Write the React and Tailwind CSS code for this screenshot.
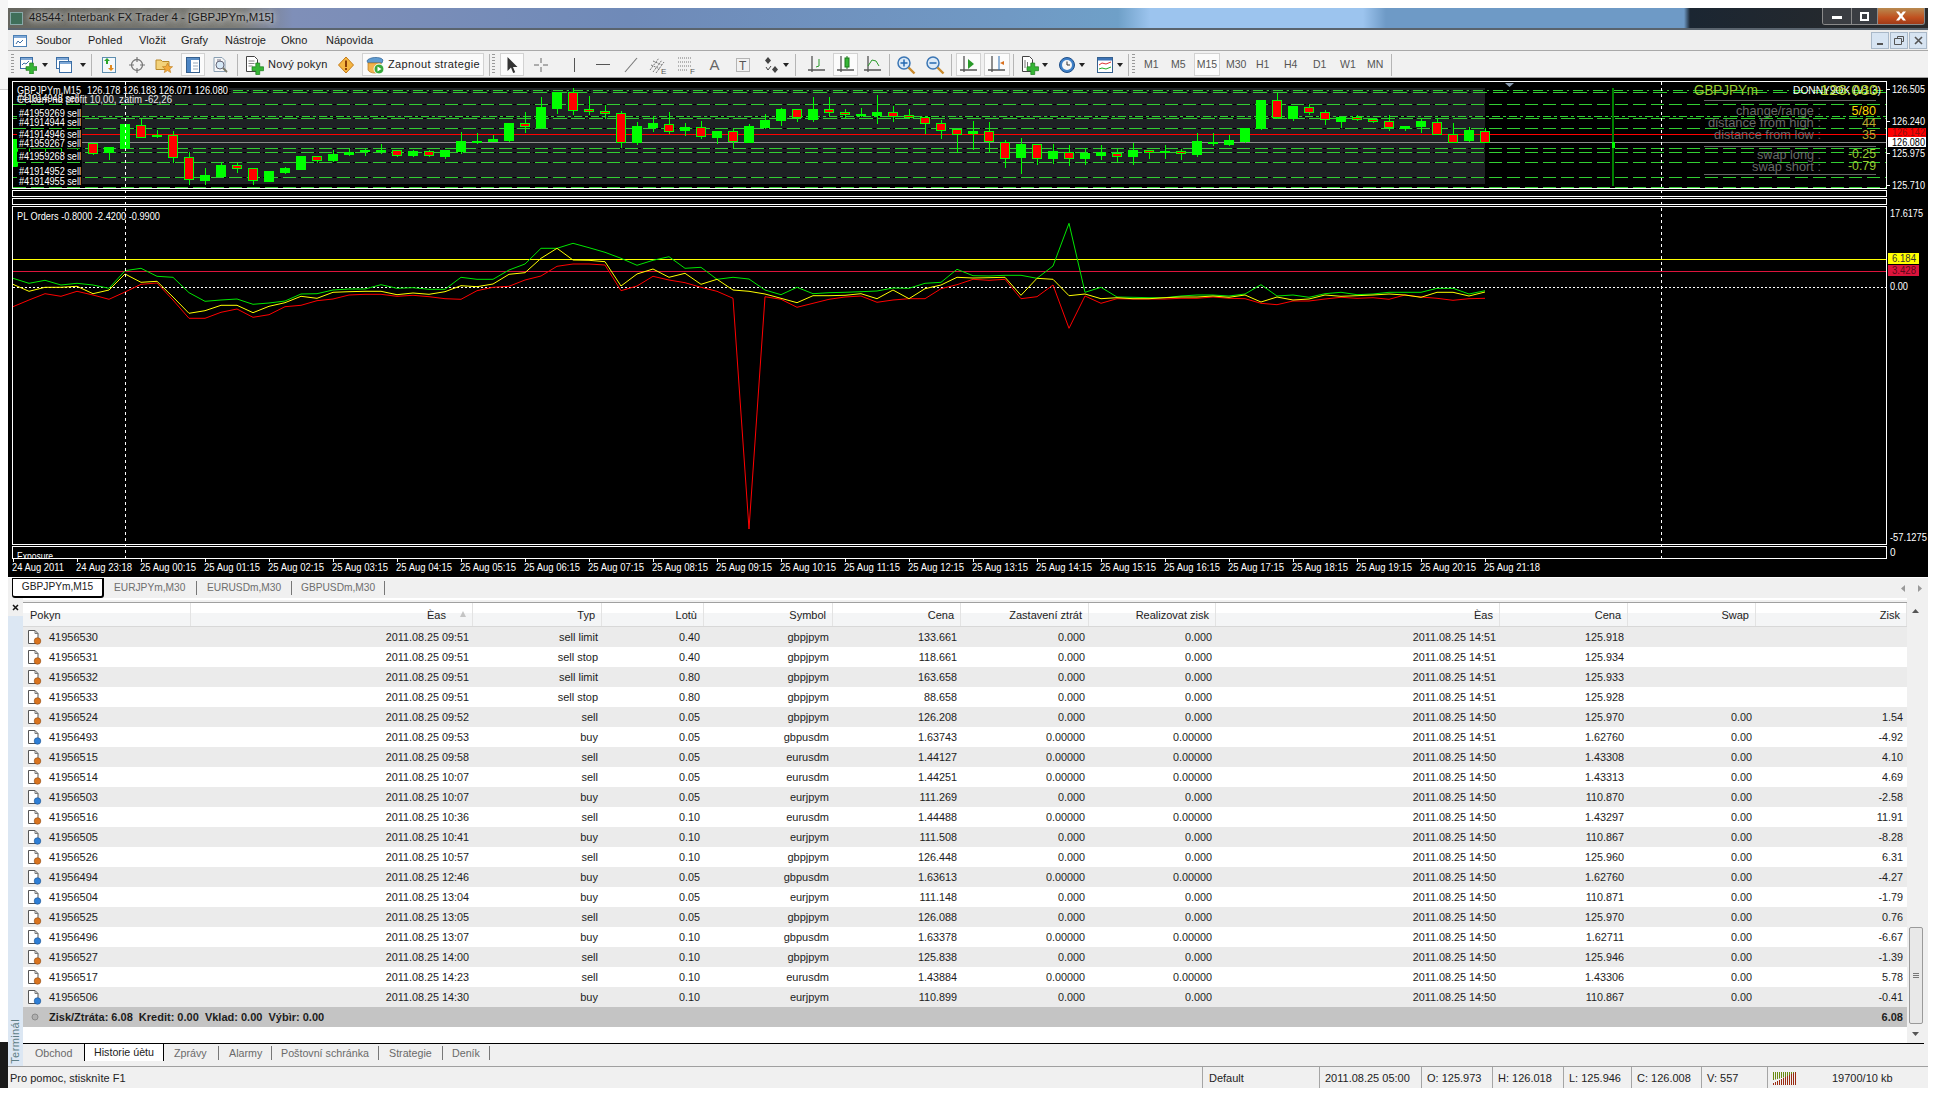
import React from "react";

const rows = [
  ["41956530","09:51","sell limit","0.40","gbpjpym","133.661","0.000","0.000","14:51","125.918","",""],
  ["41956531","09:51","sell stop","0.40","gbpjpym","118.661","0.000","0.000","14:51","125.934","",""],
  ["41956532","09:51","sell limit","0.80","gbpjpym","163.658","0.000","0.000","14:51","125.933","",""],
  ["41956533","09:51","sell stop","0.80","gbpjpym","88.658","0.000","0.000","14:51","125.928","",""],
  ["41956524","09:52","sell","0.05","gbpjpym","126.208","0.000","0.000","14:50","125.970","0.00","1.54"],
  ["41956493","09:53","buy","0.05","gbpusdm","1.63743","0.00000","0.00000","14:51","1.62760","0.00","-4.92"],
  ["41956515","09:58","sell","0.05","eurusdm","1.44127","0.00000","0.00000","14:50","1.43308","0.00","4.10"],
  ["41956514","10:07","sell","0.05","eurusdm","1.44251","0.00000","0.00000","14:50","1.43313","0.00","4.69"],
  ["41956503","10:07","buy","0.05","eurjpym","111.269","0.000","0.000","14:50","110.870","0.00","-2.58"],
  ["41956516","10:36","sell","0.10","eurusdm","1.44488","0.00000","0.00000","14:50","1.43297","0.00","11.91"],
  ["41956505","10:41","buy","0.10","eurjpym","111.508","0.000","0.000","14:50","110.867","0.00","-8.28"],
  ["41956526","10:57","sell","0.10","gbpjpym","126.448","0.000","0.000","14:50","125.960","0.00","6.31"],
  ["41956494","12:46","buy","0.05","gbpusdm","1.63613","0.00000","0.00000","14:50","1.62760","0.00","-4.27"],
  ["41956504","13:04","buy","0.05","eurjpym","111.148","0.000","0.000","14:50","110.871","0.00","-1.79"],
  ["41956525","13:05","sell","0.05","gbpjpym","126.088","0.000","0.000","14:50","125.970","0.00","0.76"],
  ["41956496","13:07","buy","0.10","gbpusdm","1.63378","0.00000","0.00000","14:50","1.62711","0.00","-6.67"],
  ["41956527","14:00","sell","0.10","gbpjpym","125.838","0.000","0.000","14:50","125.946","0.00","-1.39"],
  ["41956517","14:23","sell","0.10","eurusdm","1.43884","0.00000","0.00000","14:50","1.43306","0.00","5.78"],
  ["41956506","14:30","buy","0.10","eurjpym","110.899","0.000","0.000","14:50","110.867","0.00","-0.41"],
];

// kind (g/r), body top, body bottom, wick top, wick bottom: y values at 3x scale
const candles = [
  ["g",418,500,418,500],["r",418,442,418,458],["g",432,444,415,460],["g",434,437,430,465],["g",427,435,400,450],
  ["r",428,457,428,465],["g",442,457,442,480],["g",372,444,372,444],["r",374,409,358,412],["g",405,409,390,415],
  ["r",406,472,393,488],["r",472,539,457,555],["g",525,539,505,555],["g",495,527,485,530],["r",496,506,490,520],
  ["r",505,541,505,555],["g",513,542,513,542],["g",504,515,500,522],["g",468,507,468,510],["r",469,482,469,490],
  ["g",462,480,450,485],["g",457,464,447,467],["g",451,455,447,468],["g",451,453,433,463],["r",451,466,451,470],
  ["g",454,467,450,470],["r",454,466,450,470],["g",450,467,450,476],["g",423,453,397,462],["g",423,425,400,432],
  ["g",418,423,405,427],["g",370,420,370,425],["r",370,379,336,400],["g",321,381,292,388],["g",276,324,276,342],
  ["r",277,331,265,346],["r",328,334,288,345],["r",334,340,315,358],["r",340,427,333,445],["g",378,427,365,435],
  ["g",369,381,348,395],["r",371,391,337,402],["g",381,389,369,407],["r",382,409,363,416],["g",393,410,393,431],
  ["r",394,424,388,444],["g",378,426,372,428],["g",360,380,343,388],["g",328,362,325,378],["r",328,352,328,365],
  ["g",328,357,292,365],["r",328,337,292,347],["r",337,344,327,358],["g",343,345,324,350],["g",336,344,285,372],
  ["r",337,349,318,365],["r",346,352,328,358],["r",350,367,347,402],["r",368,388,360,417],["r",388,403,386,460],
  ["g",394,401,363,450],["r",394,424,365,455],["r",425,472,421,503],["g",432,471,415,522],["r",433,475,433,495],
  ["g",454,476,432,492],["r",455,472,436,497],["g",459,473,445,495],["g",457,465,435,480],["r",458,466,446,486],
  ["g",450,467,430,495],["r",451,457,450,477],["g",454,457,436,478],["r",454,460,446,480],["g",423,461,400,470],
  ["g",427,431,400,438],["g",420,431,405,437],["g",385,423,385,430],["g",301,386,301,390],["r",301,352,278,358],
  ["g",319,354,319,362],["r",320,336,312,345],["r",337,359,330,375],["g",350,362,350,385],["r",352,358,345,362],
  ["r",358,364,355,370],["r",364,382,345,392],["g",379,385,379,393],["g",364,380,355,400],["r",365,400,355,400],
  ["r",401,424,370,425],["g",391,420,380,425],["r",392,426,385,428],
];

const greenPL = [235,250,241,255,250,255,265,212,205,229,232,278,304,300,297,313,309,303,282,281,270,267,267,254,265,263,268,268,232,238,238,210,192,145,145,130,143,157,175,196,181,170,205,202,238,232,237,270,284,262,281,278,277,275,273,264,265,250,247,208,227,228,226,226,235,198,70,277,262,291,292,293,293,288,285,285,288,282,254,288,285,292,281,277,284,282,277,277,277,265,265,282,272];
const yellowPL = [253,274,262,262,259,281,270,222,247,244,291,340,332,316,316,338,319,308,289,295,277,275,274,274,284,279,283,275,257,260,252,223,218,175,145,180,181,185,258,222,207,232,220,253,238,270,274,282,295,308,287,287,286,281,296,270,296,266,255,232,234,233,232,286,235,238,287,282,296,293,296,296,293,291,291,288,292,285,306,291,300,297,285,289,287,285,282,285,292,277,277,288,276];
const redPL = [320,300,281,289,274,285,298,276,253,249,300,355,355,337,327,352,344,320,316,302,297,285,283,283,289,286,290,296,298,272,262,259,240,228,199,192,192,195,272,258,229,240,248,262,274,295,987,290,298,322,310,298,291,288,307,300,296,296,266,254,238,241,238,296,290,255,385,288,310,296,297,297,297,295,295,291,295,296,310,314,303,303,297,292,295,293,298,285,291,295,301,296,295];

const plPath = (a) => a.map((v, i) => `${13 + 16 * i},${(200 + v / 3).toFixed(1)}`).join(" ");

const T = ({ x, y, w, s = 10, fill = "#fff", children, weight }) => (
  <text x={x} y={y + s * 0.36} fontSize={s} fill={fill} fontWeight={weight} textLength={w} lengthAdjust="spacingAndGlyphs">
    {children}
  </text>
);

const dashLines = [
  [90.7, "10 4 2 4"], [92.7, "14 6"], [104.7, "13 5"], [116.7, "8 3 3 3"], [118.7, "14 4"], [128.7, "13 5"],
  [148.7, "13 5"], [152.7, "13 5"], [162.7, "13 5"], [177.3, "13 5"], [187.3, "13 5"],
];

const ChartOverlay = () => {
  const labels = [
    ["#41914948 sell", 98.7, 17], ["#41959269 sell", 113.7, 19], ["#41914944 sell", 122.7, 19], ["#41914946 sell", 134.7, 19],
    ["#41959267 sell", 143.3, 19], ["#41959268 sell", 156.7, 19], ["#41914952 sell", 171.7, 19], ["#41914955 sell", 181.7, 19],
  ];
  const hours = Array.from({ length: 21 }, (_, i) => `25 Aug ${String(i).padStart(2, "0")}:15`);
  const axis = ["24 Aug 2011", "24 Aug 23:18", ...hours, "25 Aug 21:18"];
  return (
    <svg className="absolute inset-0 block" width="1920" height="499" viewBox="8 78 1920 499">
      <rect x="82" y="88" width="1403" height="96" fill="#1e2124" />
      {dashLines.map(([y, d], i) => (
        <g key={i} shapeRendering="crispEdges">
          <line x1="13" x2="1886" y1={y} y2={y} stroke="#000" strokeDasharray="3 2" />
          <line x1="13" x2="1886" y1={y} y2={y} stroke="#32cd32" strokeDasharray={d} />
        </g>
      ))}
      <line x1="13" x2="1886" y1="142.5" y2="142.5" stroke="#8a8a8a" shapeRendering="crispEdges" />
      <line x1="13" x2="1886" y1="134.5" y2="134.5" stroke="#ff0000" shapeRendering="crispEdges" />
      {candles.map(([k, t, b, wt, wb], i) => {
        const x = 13 + 16 * i;
        const left = Math.max(13, x - 5);
        const right = x + 5;
        return (
          <g key={i} shapeRendering="crispEdges">
            {i > 0 && <line x1={x + 0.5} x2={x + 0.5} y1={Math.round(wt / 3)} y2={Math.round(wb / 3)} stroke="#00ff00" />}
            <rect x={left + 0.5} y={Math.round(t / 3) + 0.5} width={right - left - 1} height={Math.max(1, Math.round((b - t) / 3))} fill={k === "g" ? "#00ff00" : "#ff0000"} stroke="#00ff00" />
          </g>
        );
      })}
      <rect x="1612" y="88" width="2" height="98" fill="#008000" />
      <rect x="1612" y="142" width="3" height="6" fill="#00ff00" />
      <polygon points="1505,83 1514,83 1509.5,87" fill="#8a9bb0" />
      <rect x="13" y="85" width="216" height="10" fill="#000" />
      {labels.map(([t, y]) => (
        <rect key={t} x="17" y={y - 5} width="65" height="10" fill="#000" />
      ))}
      <T x={17} y={90} w={64}>GBPJPYm,M15</T>
      <T x={87} y={90} w={141}>126.178 126.183 126.071 126.080</T>
      {labels.map(([t, y, x]) => (
        <T key={t} x={x} y={y} w={62} fill="#fff">{t}</T>
      ))}
      <T x={17} y={99.3} w={155} fill="#e8e8e8">Celkem na profit 10,00, zatim -62,26</T>

      {/* info panel */}
      <T x={1694} y={90} w={64} s={14} fill="#9acd32">GBPJPYm</T>
      <T x={1793} y={90} w={88} s={10}>DONNY9OK (V1.3)</T>
      <T x={1820} y={90} w={58} s={15} fill="#b4d432">126.080</T>
      <line x1="1704" x2="1876" y1="100.5" y2="100.5" stroke="#666" shapeRendering="crispEdges" />
      <line x1="1704" x2="1876" y1="146.5" y2="146.5" stroke="#666" shapeRendering="crispEdges" />
      <line x1="1704" x2="1876" y1="174.5" y2="174.5" stroke="#666" shapeRendering="crispEdges" />
      <T x={1736} y={110.7} w={85} s={13} fill="#696969">change/range :</T>
      <T x={1708} y={122.7} w={113} s={13} fill="#696969">distance from high :</T>
      <T x={1714} y={134.7} w={107} s={13} fill="#696969">distance from low :</T>
      <T x={1757} y={154.7} w={64} s={13} fill="#696969">swap long :</T>
      <T x={1752} y={166.7} w={69} s={13} fill="#696969">swap short :</T>
      <T x={1851.5} y={110} w={24.5} s={13} fill="#ffd700">5/80</T>
      <T x={1862} y={122} w={14} s={13} fill="#b8a830">44</T>
      <T x={1862} y={134} w={14} s={13} fill="#b8a830">35</T>
      <T x={1848} y={153.7} w={28} s={13} fill="#9acd32">-0.25</T>
      <T x={1848} y={165.7} w={28} s={13} fill="#9acd32">-0.79</T>

      {/* price axis */}
      {[[89.5,"126.505"],[121.6,"126.240"],[153.6,"125.975"],[185.7,"125.710"]].map(([y, t]) => (
        <g key={t}>
          <line x1="1887" x2="1890" y1={y} y2={y} stroke="#fff" shapeRendering="crispEdges" />
          <T x={1892} y={y} w={33}>{t}</T>
        </g>
      ))}
      <rect x="1888" y="128" width="38" height="9" fill="#ff0000" />
      <T x={1892} y={132.5} w={33} fill="#8a1010">126.142</T>
      <rect x="1888" y="137" width="38" height="10" fill="#fff" />
      <T x={1892} y={142} w={33} fill="#000">126.080</T>

      {/* sub-window */}
      <T x={17} y={216.7} w={143}>PL Orders -0.8000 -2.4200 -0.9900</T>
      <line x1="13" x2="1886" y1="259.5" y2="259.5" stroke="#ffff00" shapeRendering="crispEdges" />
      <line x1="13" x2="1886" y1="271.5" y2="271.5" stroke="#dc143c" shapeRendering="crispEdges" />
      <line x1="13" x2="1886" y1="287.5" y2="287.5" stroke="#fff" strokeDasharray="2 2" shapeRendering="crispEdges" />
      <polyline points={plPath(greenPL)} fill="none" stroke="#00e600" strokeWidth="1" />
      <polyline points={plPath(redPL)} fill="none" stroke="#ff0000" strokeWidth="1" />
      <polyline points={plPath(yellowPL)} fill="none" stroke="#ffff00" strokeWidth="1" />
      <T x={1890} y={213} w={33}>17.6175</T>
      <rect x="1888" y="253" width="31" height="11" fill="#ffff00" />
      <T x={1892} y={258.5} w={24} fill="#333">6.184</T>
      <rect x="1888" y="265" width="31" height="11" fill="#dc143c" />
      <T x={1892} y={270.5} w={24} fill="#5a0a1a">3.428</T>
      <T x={1890} y={286.5} w={18}>0.00</T>
      <T x={1890} y={537.7} w={37}>-57.1275</T>
      <T x={1890} y={552}>0</T>
      <clipPath id="expo"><rect x="13" y="547" width="200" height="11" /></clipPath>
      <g clipPath="url(#expo)"><T x={17} y={556} w={36}>Exposure</T></g>

      {/* crosshair */}
      {[125.5, 1661.5].map((x) => (
        <line key={x} x1={x} x2={x} y1="82" y2="558" stroke="#fff" strokeDasharray="3 3" shapeRendering="crispEdges" />
      ))}

      {/* time axis */}
      {axis.map((t, i) => {
        const tick = 13 + 64 * i;
        return (
          <g key={t}>
            <line x1={tick + 0.5} x2={tick + 0.5} y1="559" y2="562" stroke="#fff" shapeRendering="crispEdges" />
            <T x={i === 0 ? 12 : tick - 1} y={567.3} w={i === 0 ? 52 : 56}>{t}</T>
          </g>
        );
      })}
    </svg>
  );
};

/* ---------- icons ---------- */
const Ic = ({ w = 18, h = 18, children }) => (
  <svg width={w} height={h} viewBox={`0 0 ${w} ${h}`} className="block shrink-0">{children}</svg>
);
const Plus = ({ x, y, s = 10 }) => (
  <path d={`M${x + s * 0.33} ${y}h${s * 0.34}v${s * 0.33}h${s * 0.33}v${s * 0.34}h-${s * 0.33}v${s * 0.33}h-${s * 0.34}v-${s * 0.33}h-${s * 0.33}v-${s * 0.34}h${s * 0.33}z`} fill="#35b535" stroke="#1b7a1b" strokeWidth=".7" />
);
const Arrow = () => <span className="block w-0 h-0 border-l-[3px] border-r-[3px] border-t-[4px] border-l-transparent border-r-transparent border-t-[#222]" />;
const Win = ({ x = 1, y = 1, w = 12, h = 11 }) => (
  <g><rect x={x + 0.5} y={y + 0.5} width={w} height={h} fill="#fff" stroke="#3b6ea5" /><rect x={x + 1} y={y + 1} width={w - 1} height="2" fill="#7fa8d6" /></g>
);
const NewChart = () => <Ic><Win /><path d="M3 9l2-2 2 1 3-3" stroke="#3b6ea5" fill="none" /><Plus x={7} y={7} s={11} /></Ic>;
const Profiles = () => <Ic><Win x={1} y={1} /><Win x={4} y={5} /></Ic>;
const MarketW = () => <Ic><rect x="2.5" y="1.5" width="13" height="15" fill="#f4f8fb" stroke="#5e8fb0" /><path d="M7 2l3 3H8v3H6V5H4z" fill="#2aa52a" /><path d="M11 15l3-3h-2V9h-2v3H8z" fill="#e08a20" /></Ic>;
const CircleCross = () => <Ic><circle cx="9" cy="9" r="5.5" fill="none" stroke="#777" strokeWidth="1.3" /><path d="M9 1v5M9 12v5M1 9h5M12 9h5" stroke="#777" strokeWidth="1.2" /></Ic>;
const FolderStar = () => <Ic><path d="M1 4h5l1.5 1.5H14v8H1z" fill="#f3d27a" stroke="#b9892a" /><path d="M12.5 7l1.5 3.4 3.6.3-2.8 2.3.9 3.6-3.2-2-3.2 2 .9-3.6L7.4 10.7l3.6-.3z" fill="#f2a93b" stroke="#c07a18" strokeWidth=".6" /></Ic>;
const Navigator = () => <Ic><rect x="2.5" y="1.5" width="13" height="15" fill="#fff" stroke="#345f8e" /><rect x="3" y="2" width="12" height="2" fill="#5b8ec5" /><rect x="3" y="4" width="4" height="12" fill="#4d86c6" /><path d="M9 7h5M9 10h5M9 13h5" stroke="#9ab" /></Ic>;
const DocMag = () => <Ic><path d="M3 1.5h8l3 3v11H3z" fill="#f6f6f6" stroke="#8aa0b4" /><circle cx="9" cy="9" r="4" fill="#d6e8f6" stroke="#667" /><path d="M12 12l4 4" stroke="#776" strokeWidth="1.8" /><path d="M7 3v3M9 3v3" stroke="#778" /></Ic>;
const DocPlus = () => <Ic w={20} h={20}><path d="M2.5 1.5h8l3 3v12h-11z" fill="#fff" stroke="#444" /><path d="M4.5 6h6M4.5 8.5h6M4.5 11h4" stroke="#888" /><Plus x={8} y={8} s={11.5} /></Ic>;
const Warn = () => <Ic><path d="M9 1l7.5 8L9 17 1.5 9z" fill="#f5b642" stroke="#c47a17" /><rect x="8" y="4.5" width="2" height="6.5" fill="#8a3d07" /><rect x="8" y="12" width="2" height="2" fill="#8a3d07" /></Ic>;
const Robot = () => <Ic w={20} h={20}><path d="M2 6c1-4 14-5 16-1l-1 3H3z" fill="#5f9bd0" stroke="#2b5f92" strokeWidth=".7" /><path d="M3 8h13v7c-2 4-11 4-13 0z" fill="#f1b34e" stroke="#b47a1d" strokeWidth=".7" /><circle cx="14" cy="14" r="5" fill="#35a83a" stroke="#fff" /><path d="M12.5 11.5l4 2.5-4 2.5z" fill="#fff" /></Ic>;
const Cursor = () => <Ic w={12} h={18}><path d="M1.5 1v14l3.5-3.5 2.2 5.5 2-.8-2.2-5.3h4.5z" fill="#333" /></Ic>;
const Cross = () => <Ic><path d="M9 2v5M9 11v5M2 9h5M11 9h5" stroke="#666" /></Ic>;
const VLine = () => <Ic w={3} h={16}><rect x="1" y="1" width="1" height="14" fill="#555" /></Ic>;
const HLine = () => <Ic h={3} w={14}><rect x="0" y="1" width="14" height="1" fill="#555" /></Ic>;
const DLine = () => <Ic w={14} h={16}><path d="M1 15L13 1" stroke="#777" strokeWidth="1.1" /></Ic>;
const FibE = () => <Ic w={20} h={20}><path d="M2 15L11 3M5 17L14 5M8 18L16 7M3 10l9 4M5 6l9 4" stroke="#777" fill="none" strokeDasharray="2 1" /><text x="13" y="19" fontSize="8" fill="#555">E</text></Ic>;
const FibF = () => <Ic w={20} h={20}><path d="M1 3h13M1 7h13M1 11h13M1 15h9" stroke="#777" strokeDasharray="1 1" /><text x="13" y="19" fontSize="8" fill="#555">F</text></Ic>;
const LetterA = () => <span className="text-[15px] leading-none text-[#666]">A</span>;
const LetterT = () => <Ic><rect x="2.5" y="2.5" width="13" height="13" fill="none" stroke="#777" strokeDasharray="1 1" /><text x="5" y="14" fontSize="12" fill="#555">T</text></Ic>;
const ArrowsSet = () => <Ic><path d="M6 1l3 3.5-3 3.5-3-3.5zM13 10l3 3.5-3 3.5-3-3.5z" fill="#444" /><path d="M4 11l2 3 3-4" stroke="#444" fill="none" /></Ic>;
const Axes = ({ children }) => <Ic w={20} h={20}><path d="M5 1v16M1 15h17" stroke="#555" strokeWidth="1.3" fill="none" />{children}</Ic>;
const Mag = ({ plus }) => <Ic w={20} h={20}><circle cx="8" cy="8" r="6" fill="#dbe9f7" stroke="#3b76b4" strokeWidth="1.5" /><path d="M4.5 8h7" stroke="#2469b0" strokeWidth="1.5" />{plus && <path d="M8 4.5v7" stroke="#2469b0" strokeWidth="1.5" />}<path d="M12.5 12.5l6 6" stroke="#c98a2c" strokeWidth="2.4" /></Ic>;
const Clock = () => <Ic><circle cx="9" cy="9" r="7.5" fill="#3e80c8" stroke="#1f4f88" /><circle cx="9" cy="9" r="5" fill="#f6f6f6" /><path d="M9 5.5V9h3" stroke="#333" fill="none" /></Ic>;
const Template = () => <Ic><rect x="1.5" y="1.5" width="15" height="15" fill="#fff" stroke="#345f8e" /><rect x="2" y="2" width="14" height="2.5" fill="#3d73b5" /><path d="M3 9l3-2 4 1 5-2" stroke="#d33" fill="none" /><path d="M3 13l3-1 4 1 5-2" stroke="#2a2" fill="none" /></Ic>;
const IndDoc = () => <Ic w={20} h={20}><path d="M3.5 1.5h7l3 3v12h-10z" fill="#fff" stroke="#444" /><path d="M6 5v8M8.5 7v5" stroke="#777" /><Plus x={8} y={8} s={11.5} /></Ic>;
const Sep = () => <span className="block w-px h-[22px] bg-[#b5b5b5]" />;
const Grip = () => <span className="block w-[3px] h-[21px] bg-[repeating-linear-gradient(#999_0_1px,transparent_1px_3px)]" />;
const RowDoc = ({ buy }) => (
  <svg width="15" height="16" viewBox="0 0 15 16" className="block shrink-0">
    <path d="M1.5 1.5h6.5l3 3v10h-9.500z" fill="#fff" stroke="#555" />
    <path d="M8 1.500v3h3" fill="none" stroke="#777" />
    <circle cx="10.500" cy="12" r="3.300" fill={buy ? "#2f7fd6" : "#d9741f"} stroke={buy ? "#1a508f" : "#8f4a12"} strokeWidth=".6" />
  </svg>
);

const Cell = ({ className = "", children }) => <div className={`pr-[4px] text-right truncate ${className}`}>{children}</div>;
const Head = ({ children }) => <div className="pr-[6px] pt-[1px] text-right border-r border-[#e3e3e3] h-full flex items-center justify-end">{children}</div>;

const gridCols = "grid grid-cols-[168px_282px_129px_102px_129px_128px_128px_127px_284px_128px_128px_151px] items-center";

export default function App() {
  return (
    <div className="w-[1936px] h-[1096px] overflow-hidden bg-white flex font-['Liberation_Sans',Arial,sans-serif] text-[11px] leading-none text-[#1c1c1c]">
      {/* desktop behind, left */}
      <div className="w-[8px] h-full flex flex-col">
        <div className="h-[90px] border-b border-[#cfcfcf] bg-[#f6f6f6]" />
        <div className="flex-1 bg-white" />
        <div className="h-[46px] bg-[#1a1a1a]" />
        <div className="h-[8px] bg-white" />
      </div>

      {/* application window */}
      <div className="w-[1920px] h-full flex flex-col pt-[8px]">
        {/* title bar */}
        <div className="h-[22px] border-b-2 border-[#5a646e] flex items-center bg-[linear-gradient(90deg,#66665f_0px,#7d7d78_230px,#7f8fb8_285px,#6f8ab8_620px,#7099c4_1000px,#6fa0c8_1110px,#9cc4ee_1142px,#9cc4ee_1355px,#6e9ac6_1378px,#6e9ac6_1676px,#1b2632_1682px,#2a2a2a_100%)]">
          <div className="w-[13px] h-[13px] ml-[2px] mr-[6px] bg-[#3f6f5a] border border-[#8aa] shrink-0" />
          <span className="text-[11.4px] text-[#1a1a1a] [text-shadow:0_0_6px_#dcdcdc,0_0_6px_#dcdcdc]">48544: Interbank FX Trader 4 - [GBPJPYm,M15]</span>
          <div className="ml-auto mr-[3px] self-start flex h-[17px] border border-t-0 border-[#8a8a8a] rounded-b-[3px] overflow-hidden">
            <div className="w-[29px] flex items-center justify-center bg-[#3a3d42] border-r border-[#8a8a8a]"><span className="block w-[10px] h-[3px] bg-white mt-[2px]" /></div>
            <div className="w-[26px] flex items-center justify-center bg-[#3a3d42] border-r border-[#8a8a8a]"><span className="block w-[9px] h-[9px] border-2 border-white" /></div>
            <div className="w-[46px] flex items-center justify-center bg-[linear-gradient(#b88a50,#c0501f_60%,#a03a18)]">
              <svg width="12" height="10" viewBox="0 0 12 10"><path d="M1 0.500h3l2 2.500 2-2.500h3L7.500 5 11 9.500H8L6 7 4 9.500H1L4.500 5z" fill="#fff" /></svg>
            </div>
          </div>
        </div>

        {/* menu */}
        <div className="h-[21px] bg-[#eeeeee] border-b border-[#a9a9a9] flex items-center relative">
          <svg width="15" height="15" viewBox="0 0 15 15" className="ml-[5px] mr-[8px] block"><rect x=".5" y="2.500" width="13" height="11" fill="#fff" stroke="#4a7fb5" /><rect x="1" y="3" width="12" height="2" fill="#7fa8d6" /><path d="M3 11l2-3 2 2 3-3" stroke="#3b6ea5" fill="none" /></svg>
          <span className="w-[52px]">Soubor</span>
          <span className="w-[51px]">Pohled</span>
          <span className="w-[42px]">Vložit</span>
          <span className="w-[44px]">Grafy</span>
          <span className="w-[56px]">Nástroje</span>
          <span className="w-[45px]">Okno</span>
          <span>Nápovìda</span>
          <div className="ml-auto mr-[1px] flex gap-[1px]">
            <div className="w-[18px] h-[17px] bg-[#d7e4f2] border border-[#a9b8c8] flex items-end justify-center pb-[3px]"><span className="block w-[6px] h-[2px] bg-[#555]" /></div>
            <div className="w-[18px] h-[17px] bg-[#d7e4f2] border border-[#a9b8c8] flex items-center justify-center"><svg width="10" height="9" viewBox="0 0 10 9"><path d="M3.500 2V.500h6v5H8M.500 2.500h7v6h-7z" fill="none" stroke="#555" /></svg></div>
            <div className="w-[18px] h-[17px] bg-[#d7e4f2] border border-[#a9b8c8] flex items-center justify-center"><svg width="9" height="9" viewBox="0 0 9 9"><path d="M1 1l7 7M8 1L1 8" stroke="#555" strokeWidth="1.600" /></svg></div>
          </div>
        </div>

        {/* toolbar */}
        <div className="h-[27px] pt-[1px] bg-[#f1f1f1] border-b border-[#9f9f9f] flex items-center text-[#222]">
          <div className="w-[8px] flex justify-center"><Grip /></div>
          <div className="w-[24px] flex justify-center"><NewChart /></div>
          <div className="w-[10px] flex justify-center"><Arrow /></div>
          <div className="w-[28px] flex justify-center"><Profiles /></div>
          <div className="w-[10px] flex justify-center"><Arrow /></div>
          <div className="w-[6px] flex justify-center"><Sep /></div>
          <div className="w-[30px] flex justify-center"><MarketW /></div>
          <div className="w-[26px] flex justify-center"><CircleCross /></div>
          <div className="w-[28px] flex justify-center"><FolderStar /></div>
          <div className="w-[3px]" />
          <div className="w-[24px] h-[23px] bg-[#fbfbfb] border border-[#d2d2d2] flex items-center justify-center"><Navigator /></div>
          <div className="w-[30px] flex justify-center"><DocMag /></div>
          <div className="w-[5px] flex justify-center"><Sep /></div>
          <div className="w-[28px] flex justify-center"><DocPlus /></div>
          <span className="w-[62px] tracking-[0.2px]">Nový pokyn</span>
          <div className="w-[32px] flex justify-center"><Warn /></div>
          <div className="w-[122px] h-[23px] bg-[#fbfbfb] border border-[#d2d2d2] flex items-center pl-[2px] gap-[3px]"><Robot /><span className="tracking-[0.38px]">Zapnout strategie</span></div>
          <div className="w-[16px] flex items-center justify-center gap-[2px]"><Sep /><Grip /></div>
          <div className="w-[24px] h-[23px] bg-[#fbfbfb] border border-[#d2d2d2] flex items-center justify-center"><Cursor /></div>
          <div className="w-[34px] flex justify-center"><Cross /></div>
          <div className="w-[33px] flex justify-center"><VLine /></div>
          <div className="w-[24px] flex justify-center"><HLine /></div>
          <div className="w-[31px] flex justify-center"><DLine /></div>
          <div className="w-[24px] flex justify-center"><FibE /></div>
          <div className="w-[34px] flex justify-center"><FibF /></div>
          <div className="w-[21px] flex justify-center"><LetterA /></div>
          <div className="w-[35px] flex justify-center"><LetterT /></div>
          <div className="w-[22px] flex justify-center"><ArrowsSet /></div>
          <div className="w-[7px] flex justify-center"><Arrow /></div>
          <div className="w-[12px] flex justify-center"><Sep /></div>
          <div className="w-[32px] flex justify-center"><Axes><path d="M12 4v7l-3 1" stroke="#2a9a2a" fill="none" /></Axes></div>
          <div className="w-[25px] h-[23px] bg-[#fbfbfb] border border-[#d2d2d2] flex items-center justify-center"><Axes><rect x="9" y="3" width="4" height="9" fill="#35b535" stroke="#1b7a1b" /><path d="M11 1v2M11 12v2" stroke="#1b7a1b" /></Axes></div>
          <div className="w-[30px] flex justify-center"><Axes><path d="M5 11l4-6 4 1 3 5" stroke="#2a9a2a" fill="none" /></Axes></div>
          <div className="w-[3px] flex justify-center"><Sep /></div>
          <div className="w-[29px] flex justify-center"><Mag plus /></div>
          <div className="w-[29px] flex justify-center"><Mag /></div>
          <div className="w-[5px] flex justify-center"><Sep /></div>
          <div className="w-[2px]" />
          <div className="w-[25px] h-[23px] bg-[#fbfbfb] border border-[#d2d2d2] flex items-center justify-center"><Axes><path d="M9 4l6 5-6 5z" fill="#2a9a2a" /></Axes></div>
          <div className="w-[3px]" />
          <div className="w-[26px] h-[23px] bg-[#fbfbfb] border border-[#d2d2d2] flex items-center justify-center"><Axes><path d="M12 1v14" stroke="#2b6cb0" /><path d="M13 8l4-2v4z" fill="#d8701f" /></Axes></div>
          <div className="w-[7px] flex justify-center"><Sep /></div>
          <div className="w-[24px] flex justify-center"><IndDoc /></div>
          <div className="w-[8px] flex justify-center"><Arrow /></div>
          <div className="w-[27px] flex justify-end"><Clock /></div>
          <div className="w-[12px] flex justify-center"><Arrow /></div>
          <div className="w-[26px] flex justify-end"><Template /></div>
          <div className="w-[11px] flex justify-center"><Arrow /></div>
          <div className="w-[6px] flex justify-center"><Sep /></div>
          <div className="w-[5px] flex justify-center"><Grip /></div>
          <div className="text-[#555] flex items-center text-[10.5px]">
            <span className="w-[35px] pl-[8px]">M1</span>
            <span className="w-[23px]">M5</span>
            <span className="w-[26px] h-[23px] bg-[#fbfbfb] border border-[#d2d2d2] flex items-center justify-center">M15</span>
            <span className="w-[36px] pl-[6px]">M30</span>
            <span className="w-[28px]">H1</span>
            <span className="w-[29px]">H4</span>
            <span className="w-[27px]">D1</span>
            <span className="w-[27px]">W1</span>
            <span className="w-[23px]">MN</span>
          </div>
          <div className="w-[3px] flex justify-center"><Sep /></div>
        </div>

        {/* chart area */}
        <div className="relative h-[499px] bg-black">
          <div className="pl-[4px] pt-[3px] flex flex-col gap-[1px]">
            <div className="w-[1875px] h-[108px] border border-white" />
            <div className="w-[1875px] h-[7px] border border-white" />
            <div className="w-[1875px] h-[7px] border border-white" />
            <div className="w-[1875px] h-[339px] border border-white" />
            <div className="w-[1875px] h-[13px] border border-white" />
          </div>
          <ChartOverlay />
        </div>
        <div className="h-px bg-white shrink-0" />

        {/* chart tabs */}
        <div className="h-[20px] bg-[#f0f0f0] flex items-center text-[#6e6e6e] text-[10.2px] relative">
          <div className="ml-[4px] w-[92px] h-[20px] bg-white border border-black border-r-2 border-b-2 rounded-b-[3px] flex items-center justify-center text-[#222]">GBPJPYm,M15</div>
          <div className="w-[93px] pl-[10px] h-[14px] flex items-center border-r border-[#777]">EURJPYm,M30</div>
          <div className="w-[95px] pl-[10px] h-[14px] flex items-center border-r border-[#777]">EURUSDm,M30</div>
          <div className="w-[93px] pl-[9px] h-[14px] flex items-center border-r border-[#777]">GBPUSDm,M30</div>
          <div className="ml-auto mr-[6px] flex gap-[13px]">
            <svg width="4" height="7" viewBox="0 0 4 7"><path d="M4 0L0 3.500 4 7z" fill="#999" /></svg>
            <svg width="4" height="7" viewBox="0 0 4 7"><path d="M0 0l4 3.500L0 7z" fill="#999" /></svg>
          </div>
        </div>

        {/* terminal */}
        <div className="h-[469px] flex border-b border-[#a0a0a0] bg-[#f0f0f0]">
          <div className="w-[15px] flex flex-col">
            <div className="h-[18px] flex items-center justify-center">
              <svg width="7" height="7" viewBox="0 0 7 7"><path d="M1 1l5 5M6 1L1 6" stroke="#111" strokeWidth="1.500" /></svg>
            </div>
            <div className="flex-1 bg-[#dce7f3] flex items-end justify-center pb-[2px]">
              <span className="[writing-mode:vertical-rl] rotate-180 text-[#5f7f85] tracking-[0.4px]">Terminál</span>
            </div>
          </div>
          <div className="w-[1901px] flex flex-col">
            <div className="flex h-[445px]">
              <div className="w-[1884px] flex flex-col bg-white">
                <div className="h-[5px] bg-[#f0f0f0] border-t-[2px] border-b border-t-white border-b-[#a0a0a0] shrink-0" />
                <div className={`${gridCols} h-[24px] shrink-0 border-b border-[#d8d8d8] text-[#222] bg-[linear-gradient(#ffffff_45%,#f4f5f6_45%)]`}>
                  <div className="pl-[7px] pt-[1px] border-r border-[#e3e3e3] h-full flex items-center">Pokyn</div>
                  <div className="pr-[26px] pt-[1px] text-right border-r border-[#e3e3e3] h-full flex items-center justify-end relative">Èas<span className="absolute right-[6px] top-[8px] w-0 h-0 border-l-[3px] border-r-[3px] border-b-[6px] border-l-transparent border-r-transparent border-b-[#c4c4c4]" /></div>
                  <Head>Typ</Head><Head>Lotù</Head><Head>Symbol</Head><Head>Cena</Head><Head>Zastavení ztrát</Head><Head>Realizovat zisk</Head><Head>Èas</Head><Head>Cena</Head><Head>Swap</Head><Head>Zisk</Head>
                </div>
                {rows.map((r, i) => (
                  <div key={r[0]} className={`${gridCols} h-[20px] shrink-0 ${i % 2 === 0 ? "bg-[#ebebeb]" : "bg-white"}`}>
                    <div className="flex items-center pl-[4px] gap-[7px] text-[11px]"><RowDoc buy={r[2] === "buy"} /><span>{r[0]}</span></div>
                    <Cell className="text-[10.8px]">2011.08.25 {r[1]}</Cell>
                    <Cell>{r[2]}</Cell>
                    <Cell className="text-[10.8px]">{r[3]}</Cell>
                    <Cell>{r[4]}</Cell>
                    <Cell className="text-[10.8px]">{r[5]}</Cell>
                    <Cell className="text-[10.8px]">{r[6]}</Cell>
                    <Cell className="text-[10.8px]">{r[7]}</Cell>
                    <Cell className="text-[10.8px]">2011.08.25 {r[8]}</Cell>
                    <Cell className="text-[10.8px]">{r[9]}</Cell>
                    <Cell className="text-[10.8px]">{r[10]}</Cell>
                    <Cell className="text-[10.8px]">{r[11]}</Cell>
                  </div>
                ))}
                <div className="h-[20px] shrink-0 bg-[#c4c4c4] flex items-center font-bold pr-[4px]">
                  <svg width="8" height="8" viewBox="0 0 8 8" className="ml-[8px] mr-[10px] block"><circle cx="4" cy="4" r="3" fill="#b0b0b0" stroke="#8a8a8a" /></svg>
                  <span>Zisk/Ztráta: 6.08&nbsp; Kredit: 0.00&nbsp; Vklad: 0.00&nbsp; Výbìr: 0.00</span>
                  <span className="ml-auto">6.08</span>
                </div>
                <div className="flex-1 bg-white" />
              </div>
              <div className="w-[17px] bg-[#f0f0f0] flex flex-col items-center border-t-[5px] border-[#f0f0f0]">
                <svg width="7" height="4" viewBox="0 0 7 4" className="mt-[6px]"><path d="M3.500 0L7 4H0z" fill="#555" /></svg>
                <div className="mt-[314px] w-[14px] h-[97px] bg-[#e8e8e8] border border-[#9a9a9a] rounded-[2px] flex items-center justify-center">
                  <span className="block w-[6px] h-[6px] bg-[repeating-linear-gradient(#777_0_1px,transparent_1px_2px)]" />
                </div>
                <svg width="7" height="4" viewBox="0 0 7 4" className="mt-[8px]"><path d="M0 0h7L3.500 4z" fill="#555" /></svg>
              </div>
            </div>
            <div className="h-[23px] border-t border-black flex items-start text-[#6a6a6a] text-[10.7px]">
              <div className="w-[61px] h-[19px] pl-[12px] flex items-center">Obchod</div>
              <div className="w-[80px] h-[17px] bg-white border-x border-black flex items-center justify-center text-[#222]">Historie úètu</div>
              <div className="w-[55px] h-[14px] mt-[2px] pl-[10px] flex items-center border-r border-[#777]">Zprávy</div>
              <div className="w-[53px] h-[14px] mt-[2px] pl-[10px] flex items-center border-r border-[#777]">Alarmy</div>
              <div className="w-[107px] h-[14px] mt-[2px] pl-[9px] flex items-center border-r border-[#777]">Poštovní schránka</div>
              <div className="w-[64px] h-[14px] mt-[2px] pl-[10px] flex items-center border-r border-[#777]">Strategie</div>
              <div className="w-[47px] h-[14px] mt-[2px] pl-[9px] flex items-center border-r border-[#777]">Deník</div>
            </div>
          </div>
        </div>

        {/* status bar */}
        <div className="h-[21px] bg-[#f0f0f0] flex items-stretch text-[#222]">
          <div className="w-[1194px] flex items-center pl-[2px] pt-[2px]">Pro pomoc, stisknìte F1</div>
          <div className="w-[117px] flex items-center pl-[6px] pt-[2px] border-l border-[#a5a5a5]">Default</div>
          <div className="w-[102px] flex items-center pl-[5px] pt-[2px] border-l border-[#a5a5a5]">2011.08.25 05:00</div>
          <div className="w-[71px] flex items-center pl-[5px] pt-[2px] border-l border-[#a5a5a5]">O: 125.973</div>
          <div className="w-[71px] flex items-center pl-[5px] pt-[2px] border-l border-[#a5a5a5]">H: 126.018</div>
          <div className="w-[68px] flex items-center pl-[5px] pt-[2px] border-l border-[#a5a5a5]">L: 125.946</div>
          <div className="w-[70px] flex items-center pl-[5px] pt-[2px] border-l border-[#a5a5a5]">C: 126.008</div>
          <div className="w-[66px] flex items-center pl-[5px] pt-[2px] border-l border-[#a5a5a5]">V: 557</div>
          <div className="flex-1 flex items-center pl-[5px] pt-[2px] border-l border-[#a5a5a5]">
            <svg width="24" height="13" viewBox="0 0 24 13" className="block shrink-0">
              {[0,1,2,3,4,5,6,7,8,9,10,11].map((i) => (
                <g key={i}>
                  <rect x={i * 2} y="0" width="1" height={8 - i * 0.5} fill="#6a8a10" />
                  <rect x={i * 2} y={13 - (i + 2)} width="1" height={i + 2} fill="#9a2a10" />
                </g>
              ))}
            </svg>
            <span className="ml-[35px]">19700/10 kb</span>
          </div>
        </div>
      </div>

      <div className="w-[8px] h-full bg-white" />
    </div>
  );
}
